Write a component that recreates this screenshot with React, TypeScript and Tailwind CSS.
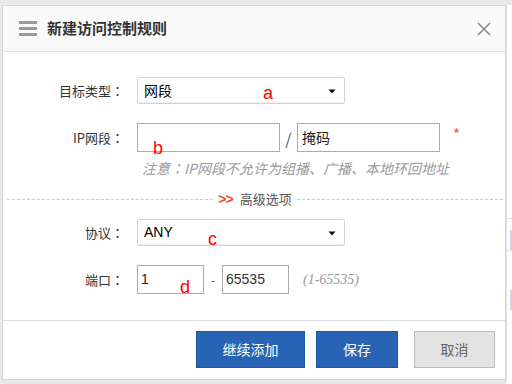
import React from 'react';

const font = { fontFamily: '"Noto Sans CJK SC", "Liberation Sans", sans-serif' };
// centred full-width colon, as in the original page
const colonFont = { fontFamily: '"Noto Sans CJK TC", "Noto Sans CJK SC", sans-serif' };

const Mark: React.FC<{ ch: string; className: string }> = ({ ch, className }) => (
  <span
    className={`absolute text-[18px] leading-[18px] text-[#ff0000] ${className}`}
    style={{ fontFamily: '"Liberation Sans", Arial, sans-serif' }}
  >
    {ch}
  </span>
);

const Caret = () => (
  <svg width="8" height="5" viewBox="0 0 8 5" className="absolute right-[8px] top-[11px]">
    <path d="M0.5 0.5 H7.5 L4 4.5 Z" fill="#111" />
  </svg>
);

const Label: React.FC<{ text: string }> = ({ text }) => (
  <div className="w-[121px] shrink-0 flex justify-end text-[13px] text-[#333]">
    <span>{text}</span>
    <span className="w-[13px] text-center" style={colonFont}>：</span>
  </div>
);

const App: React.FC = () => {
  return (
    <div className="w-[512px] h-[384px] overflow-hidden bg-[#e9e9e9] flex" style={font}>
      <div className="mt-[5px] ml-[2px] w-[504px] h-[375px] bg-white border border-[#d6d6d6] flex flex-col shrink-0">
        {/* header */}
        <div className="h-[46px] shrink-0 bg-[#fafafa] border-b border-[#dddddd] flex items-center pl-[16px] pr-[14px]">
          <div className="flex flex-col gap-[3px] w-[18px]">
            <span className="h-[3px] bg-[#9a9a9a]" />
            <span className="h-[3px] bg-[#9a9a9a]" />
            <span className="h-[3px] bg-[#9a9a9a]" />
          </div>
          <h1 className="ml-[10px] text-[15px] font-bold text-[#333]">新建访问控制规则</h1>
          <svg width="14" height="14" viewBox="0 0 14 14" className="ml-auto">
            <path d="M1 1 L13 13 M13 1 L1 13" stroke="#8a8a8a" strokeWidth="1.6" />
          </svg>
        </div>

        {/* body */}
        <div className="flex-1 flex flex-col">
          <div className="mt-[25px] h-[27px] flex items-center">
            <Label text="目标类型" />
            <div className="ml-[13px] relative w-[208px] h-[27px] border border-[#d3d3d3] rounded-[2px] shadow-[inset_0_-1px_0_#eef0f4] flex items-center pl-[6px] text-[14px] text-black">
              网段
              <Mark ch="a" className="left-[125px] top-[6px]" />
              <Caret />
            </div>
          </div>

          <div className="mt-[19px] h-[29px] flex items-center">
            <Label text="IP网段" />
            <div className="ml-[13px] relative w-[143px] h-[29px] border border-[#ababab]">
              <Mark ch="b" className="left-[15px] top-[15px]" />
            </div>
            <span className="w-[17px] text-center text-[16px] text-[#555]">/</span>
            <div className="w-[143px] h-[29px] border border-[#ababab] flex items-center pl-[4px] text-[14px] text-[#222]">掩码</div>
            <span className="ml-[13px] -mt-[6px] text-[15px] text-[#f25a4a]">*</span>
          </div>

          <div className="mt-[6px] h-[20px] flex items-center pl-[139px] text-[14px] italic text-[#9a9a9a]">
            注意<span style={colonFont}>：</span>IP网段不允许为组播、广播、本地环回地址
          </div>

          <div className="mt-[11px] h-[20px] flex items-center pl-[4px] pr-[2px]">
            <div className="flex-1 border-t border-dashed border-[#cccccc]" />
            <span className="px-[5px] flex items-center gap-[7px] text-[13px] text-[#555]">
              <span className="font-bold text-[14px] text-[#ef4a22] tracking-[-1px]" style={{ fontFamily: '"Liberation Sans", sans-serif' }}>&gt;&gt;</span>
              高级选项
            </span>
            <div className="flex-1 border-t border-dashed border-[#cccccc]" />
          </div>

          <div className="mt-[10px] h-[27px] flex items-center">
            <Label text="协议" />
            <div className="ml-[13px] relative w-[208px] h-[27px] border border-[#d3d3d3] rounded-[2px] shadow-[inset_0_-1px_0_#eef0f4] flex items-center pl-[6px] text-[14px] text-black" style={{ fontFamily: '"Liberation Sans", sans-serif' }}>
              ANY
              <Mark ch="c" className="left-[70px] top-[10px]" />
              <Caret />
            </div>
          </div>

          <div className="mt-[19px] h-[29px] flex items-center">
            <Label text="端口" />
            <div className="ml-[13px] relative w-[67px] h-[29px] border border-[#ababab] flex items-center pl-[3px] text-[14px] text-[#222]" style={{ fontFamily: '"Liberation Sans", sans-serif' }}>
              1
              <Mark ch="d" className="left-[42px] top-[12px]" />
            </div>
            <span className="w-[18px] text-center text-[13px] text-[#666]">-</span>
            <div className="w-[67px] h-[29px] border border-[#ababab] flex items-center pl-[3px] text-[14px] text-[#333]" style={{ fontFamily: '"Liberation Sans", sans-serif' }}>
              65535
            </div>
            <span className="ml-[14px] text-[14px] italic text-[#999]" style={{ fontFamily: '"Liberation Serif", serif' }}>(1-65535)</span>
          </div>
        </div>

        {/* footer */}
        <div className="h-[59px] shrink-0 border-t border-[#dddddd] flex items-start justify-end gap-[11px] pt-[10px] pr-[10px]">
          <button className="w-[109px] h-[37px] bg-[#2963b4] border border-[#1b5a9c] text-white text-[14px]">继续添加</button>
          <button className="w-[82px] h-[37px] bg-[#2963b4] border border-[#1b5a9c] text-white text-[14px]">保存</button>
          <button className="ml-[5px] w-[81px] h-[37px] bg-[#e3e3e3] border border-[#bcbcbc] text-[#666] text-[14px]">取消</button>
        </div>
      </div>

      {/* page behind */}
      <div className="flex-1 mt-[5px] flex flex-col bg-white border-l border-[#e2e2e2]">
        <div className="h-[213px]" />
        <div className="h-[12px] border-t border-[#e4e4e4]" />
        <div className="h-[20px] ml-[3px] border-l-2 border-[#c9d3ea]" />
        <div className="h-[40px] border-t border-[#e4e4e4]" />
        <div className="h-[20px] ml-[3px] border-l-2 border-[#c9d3ea]" />
      </div>
    </div>
  );
};

export default App;
